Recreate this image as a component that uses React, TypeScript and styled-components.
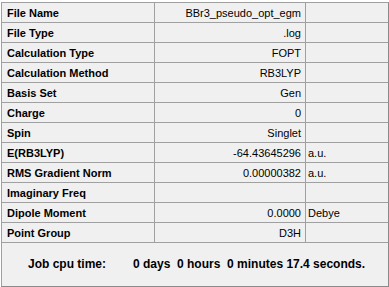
import React from 'react';
import styled, {createGlobalStyle} from "styled-components";

const GlobalStyle = createGlobalStyle`
  html, body {
    margin: 0;
    padding: 0;
    background: #ffffff;
  }
  body {
    font-family: "Liberation Sans", Arial, sans-serif;
  }
`

const StyledPanel = styled.div`
  margin: 2px 0 0 1px;
  width: 386px;
  height: 283px;
  background: #f0f0f0;
  border: 1px solid #a0a0a0;
  border-right-color: #8a8a8a;
  border-bottom-color: #8a8a8a;
  display: flex;
  flex-direction: column;
`

const StyledGrid = styled.div`
  display: grid;
  grid-template-columns: 153px 151px 1fr;
  grid-auto-rows: 20px;
`

const StyledCell = styled.div<{ $kind: "label" | "value" | "unit" }>`
  box-sizing: border-box;
  height: 20px;
  border-bottom: 1px solid #a0a0a0;
  border-right: ${p => p.$kind === "unit" ? "none" : "1px solid #a0a0a0"};
  display: flex;
  align-items: center;
  justify-content: ${p => p.$kind === "value" ? "flex-end" : "flex-start"};
  padding: ${p => p.$kind === "label" ? "0 0 0 5px" : p.$kind === "value" ? "0 4px 0 0" : "0 0 0 2px"};
  font-size: 11px;
  font-weight: ${p => p.$kind === "label" ? "bold" : "normal"};
  color: #000000;
  white-space: nowrap;
  overflow: hidden;
`

const StyledFooter = styled.div`
  flex: 1;
  display: flex;
  align-items: center;
  padding: 0 0 2px 26px;
  font-size: 12px;
  font-weight: bold;
  color: #000000;
  white-space: pre;
`

const StyledFooterLabel = styled.span`
  width: 105px;
`

const rows: [string, string, string][] = [
    ["File Name", "BBr3_pseudo_opt_egm", ""],
    ["File Type", ".log", ""],
    ["Calculation Type", "FOPT", ""],
    ["Calculation Method", "RB3LYP", ""],
    ["Basis Set", "Gen", ""],
    ["Charge", "0", ""],
    ["Spin", "Singlet", ""],
    ["E(RB3LYP)", "-64.43645296", "a.u."],
    ["RMS Gradient Norm", "0.00000382", "a.u."],
    ["Imaginary Freq", "", ""],
    ["Dipole Moment", "0.0000", "Debye"],
    ["Point Group", "D3H", ""],
]

const App: React.FC = () => {
    return (
        <>
            <GlobalStyle/>
            <StyledPanel>
                <StyledGrid>
                    {rows.map(([label, value, unit]) => (
                        <React.Fragment key={label}>
                            <StyledCell $kind="label">{label}</StyledCell>
                            <StyledCell $kind="value">{value}</StyledCell>
                            <StyledCell $kind="unit">{unit}</StyledCell>
                        </React.Fragment>
                    ))}
                </StyledGrid>
                <StyledFooter>
                    <StyledFooterLabel>{"Job cpu time:"}</StyledFooterLabel>
                    <span>{"0 days  0 hours  0 minutes 17.4 seconds."}</span>
                </StyledFooter>
            </StyledPanel>
        </>
    );
};

export default App;
